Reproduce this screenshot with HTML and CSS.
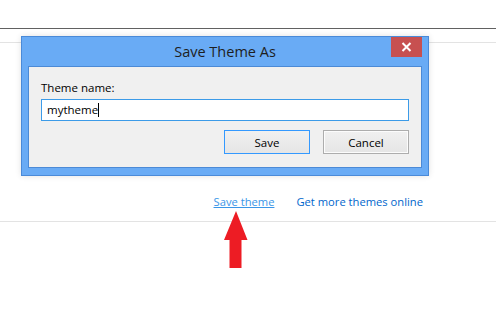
FILE: index.html
```html
<!DOCTYPE html>
<html lang="en">
<head>
    <meta charset="UTF-8">
    <title>Personalization - Save Theme</title>
    <link rel="stylesheet" href="styles.css">
</head>
<body>
    <div class="top-bar"></div>

    <div class="themes-panel">
        <div class="theme-links">
            <a href="#" class="theme-link active">Save theme</a>
            <a href="#" class="theme-link">Get more themes online</a>
        </div>
    </div>

    <div class="dialog">
        <div class="dialog-title">
            <span>Save Theme As</span>
            <button class="close-btn" aria-label="Close">
                <svg width="11" height="10" viewBox="0 0 11 10">
                    <path d="M1.5 1 L9.5 9 M9.5 1 L1.5 9" stroke="#fff" stroke-width="2"/>
                </svg>
            </button>
        </div>
        <div class="dialog-body">
            <label class="field-label" for="theme-name">Theme name:</label>
            <div class="field-input">mytheme<span class="caret"></span></div>
            <div class="dialog-buttons">
                <button class="btn btn-default">Save</button>
                <button class="btn">Cancel</button>
            </div>
        </div>
    </div>

    <div class="arrow">
        <svg width="24" height="58" viewBox="0 0 24 58">
            <polygon points="12,0 23.5,29 17.5,29 17.5,57 5.5,57 5.5,29 0,29" fill="#ed1c24"/>
        </svg>
    </div>
</body>
</html>
```

FILE: styles.css
```css
* {
    margin: 0;
    padding: 0;
    box-sizing: border-box;
}

body {
    font-family: 'Open Sans', 'Noto Sans', sans-serif;
    background: #fff;
    color: #000;
    width: 496px;
    height: 313px;
    overflow: hidden;
    position: relative;
}

.top-bar {
    height: 29px;
    border-bottom: 1px solid #616161;
}

.themes-panel {
    margin-top: 13px;
    height: 180px;
    border-top: 1px solid #e3e3e3;
    border-bottom: 1px solid #e3e3e3;
    display: flex;
    align-items: flex-end;
    justify-content: flex-end;
    padding: 0 73px 12px 0;
}

.theme-links {
    display: flex;
    gap: 22px;
    font-size: 11.2px;
}

.theme-link {
    color: #0066cc;
    text-decoration: none;
}

.theme-link.active {
    color: #3a96e8;
    text-decoration: underline;
}

/* dialog window */
.dialog {
    position: absolute;
    left: 21px;
    top: 36px;
    width: 408px;
    height: 140px;
    background: #69abf5;
    border: 1px solid #4a8ad8;
    padding: 0 6px 7px 6px;
    display: flex;
    flex-direction: column;
    box-shadow: 0 0 6px rgba(0,0,0,0.12);
}

.dialog-title {
    height: 29px;
    display: flex;
    align-items: center;
    justify-content: center;
    position: relative;
    font-size: 14.5px;
    color: #1e1e1e;
}

.close-btn {
    position: absolute;
    right: 0;
    top: 0;
    width: 31px;
    height: 20px;
    background: #c75050;
    border: none;
    display: flex;
    align-items: center;
    justify-content: center;
}

.dialog-body {
    flex: 1;
    background: #f0f0f0;
    border: 1px solid #4c8ad6;
    padding: 13px 12px 0 12px;
    display: flex;
    flex-direction: column;
}

.field-label {
    font-size: 11.5px;
    line-height: 16px;
    color: #000;
}

.field-input {
    margin-top: 3px;
    height: 22px;
    background: #fff;
    border: 1px solid #3c9be8;
    font-size: 11.5px;
    line-height: 20px;
    padding-left: 5px;
    display: flex;
    align-items: center;
}

.caret {
    display: inline-block;
    width: 1px;
    height: 14px;
    background: #000;
}

.dialog-buttons {
    display: flex;
    justify-content: flex-end;
    gap: 13px;
    margin-top: 9px;
}

.btn {
    width: 86px;
    height: 24px;
    font-family: inherit;
    font-size: 11.5px;
    color: #000;
    background: linear-gradient(#f0f0f0, #e5e5e5);
    border: 1px solid #adadad;
    box-shadow: inset 0 0 0 1px #fcfcfc;
}

.btn-default {
    border-color: #3399ff;
    box-shadow: none;
}

.arrow {
    position: absolute;
    left: 224px;
    top: 211px;
    line-height: 0;
}
```
